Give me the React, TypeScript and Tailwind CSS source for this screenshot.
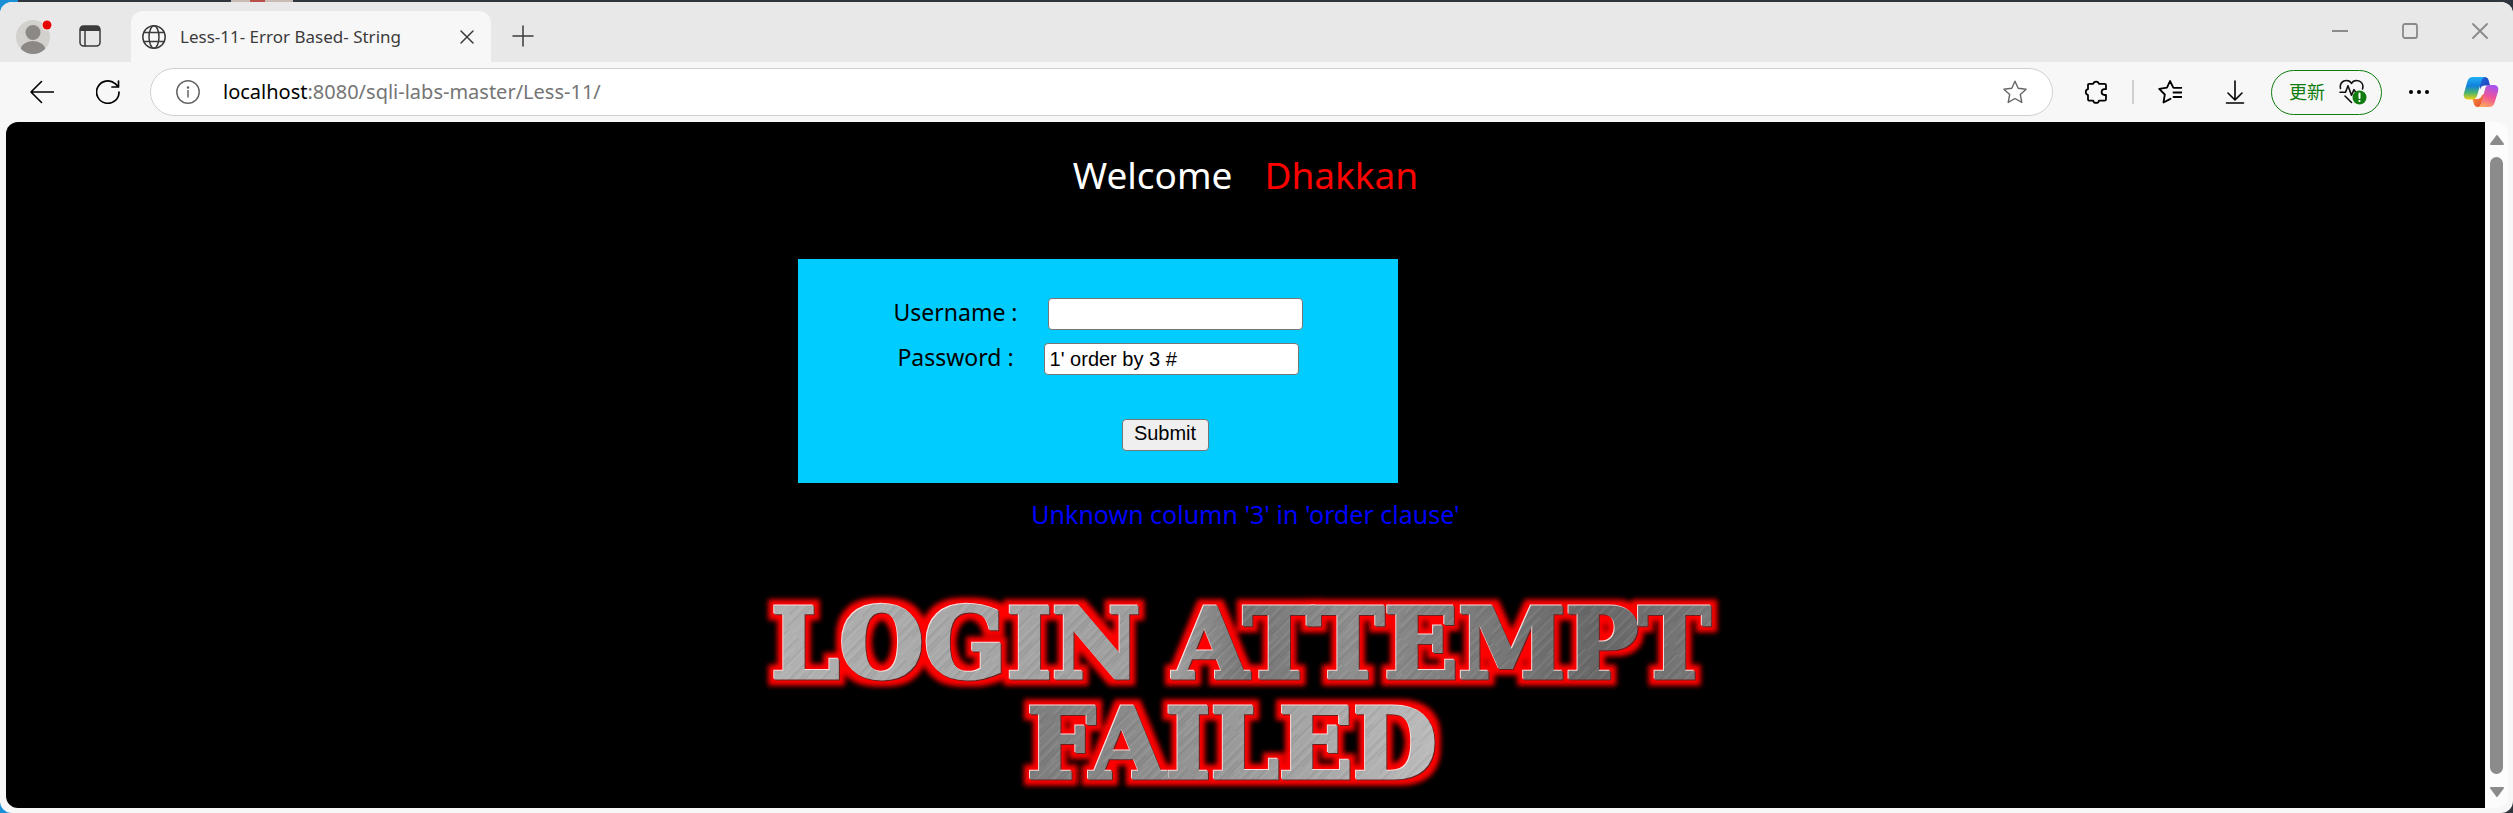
import React, { useState } from "react";

const ui = "font-['Noto_Sans','Noto_Sans_CJK_SC',sans-serif]";

type IconProps = { className?: string; children: React.ReactNode; box?: string; stroke?: number };

function Icon({ className = "size-6", children, box = "0 0 24 24", stroke = 2 }: IconProps) {
  return (
    <svg
      className={`block shrink-0 ${className}`}
      viewBox={box}
      fill="none"
      stroke="currentColor"
      strokeWidth={stroke}
      strokeLinecap="round"
      strokeLinejoin="round"
      aria-hidden="true"
    >
      {children}
    </svg>
  );
}

function Avatar() {
  return (
    <svg className="block size-10" viewBox="0 0 40 40" aria-hidden="true">
      <defs>
        <clipPath id="avatar-clip">
          <circle cx="20" cy="21" r="17" />
        </clipPath>
      </defs>
      <circle cx="20" cy="21" r="17" fill="#d3d1ce" />
      <circle cx="20" cy="16.500" r="7.500" fill="#8c8885" />
      <ellipse cx="20" cy="34" rx="12.500" ry="9" fill="#8c8885" clipPath="url(#avatar-clip)" />
      <circle cx="34" cy="9" r="5.500" fill="#f4f4f4" />
      <circle cx="34" cy="9" r="4.500" fill="#e60000" />
    </svg>
  );
}

function CopilotLogo() {
  return (
    <svg className="block h-8 w-9" viewBox="0 0 36 32" aria-hidden="true">
      <defs>
        <linearGradient id="cp-left" x1="0" y1="0" x2="0" y2="1">
          <stop offset="0" stopColor="#22b0f5" />
          <stop offset="0.4" stopColor="#1280dc" />
          <stop offset="0.7" stopColor="#4cb46c" />
          <stop offset="1" stopColor="#f4cf12" />
        </linearGradient>
        <linearGradient id="cp-right" x1="0.6" y1="0" x2="0.3" y2="1">
          <stop offset="0" stopColor="#a653ee" />
          <stop offset="0.5" stopColor="#ee5399" />
          <stop offset="1" stopColor="#ffa75c" />
        </linearGradient>
        <linearGradient id="cp-top" x1="0" y1="0" x2="1" y2="1">
          <stop offset="0" stopColor="#1f6fe0" />
          <stop offset="1" stopColor="#1b35b4" />
        </linearGradient>
        <linearGradient id="cp-bottom" x1="0" y1="0" x2="1" y2="1">
          <stop offset="0" stopColor="#ffa03c" />
          <stop offset="1" stopColor="#dc3a30" />
        </linearGradient>
      </defs>
      <path d="M16 1h5.500c2.500 0 3.600 1.500 4.200 3.500L27 9.500h-5c-3 0-4 1.500-5 4z" fill="url(#cp-top)" />
      <path d="M20 31h-5c-2.500 0-3.600-1.500-4.200-3.500L9.500 23H14c3 0 4-1.500 5-4l3-1z" fill="url(#cp-bottom)" />
      <path d="M10 1h12c-2 .5-3 2-3.700 4.300l-4.100 14C13.400 22 12 23.500 9.500 23.500H5c-3.600 0-5-3-4-6.500L4.500 5C5.400 2.300 7 1 10 1z" fill="url(#cp-left)" />
      <path d="M26.500 9H31c3.600 0 5 3 4 6.500L31.500 27c-.9 2.700-2.500 4-5.500 4H14.500c2-.5 3-2 3.700-4.300l4-14C23 10 24 9 26.500 9z" fill="url(#cp-right)" />
    </svg>
  );
}

function TitleBar() {
  return (
    <header className="flex h-[60px] bg-[#e8e8e8] text-[#3b3b3b]">
      <div className="flex w-[131px] items-center pl-[13px]">
        <button type="button" aria-label="Profile" className="mt-2">
          <Avatar />
        </button>
        <button type="button" aria-label="Tab actions" className="mt-2 ml-[25px]">
          <Icon>
            <rect x="2" y="2" width="20" height="20" rx="3.500" strokeWidth="1.500" />
            <path d="M2 7V5a3 3 0 0 1 3-3h14a3 3 0 0 1 3 3v2z" fill="currentColor" stroke="none" />
            <path d="M7 7v15" strokeWidth="1.500" />
          </Icon>
        </button>
      </div>
      <div className="flex h-[51px] w-[360px] items-center self-end rounded-t-xl bg-[#f7f7f7] pl-[11px]">
        <Icon stroke={1.5}>
          <circle cx="12" cy="12" r="11.200" />
          <ellipse cx="12" cy="12" rx="5" ry="11.200" />
          <path d="M2 7.500h20M2 16.500h20" />
        </Icon>
        <h1 className="ml-3.5 text-[17px] leading-6 whitespace-nowrap">Less-11- Error Based- String</h1>
        <button type="button" aria-label="Close tab" className="mr-4 ml-auto">
          <Icon className="size-4" box="0 0 16 16" stroke={1.5}>
            <path d="M2 2l12 12M14 2L2 14" />
          </Icon>
        </button>
      </div>
      <button type="button" aria-label="New tab" className="mt-2 ml-5">
        <Icon stroke={1.5}>
          <path d="M12 2v20M2 12h20" />
        </Icon>
      </button>
      <div className="ml-auto flex items-center gap-[54px] pr-[25px] pb-0.5 text-[#8a8a8a]">
        <button type="button" aria-label="Minimize">
          <Icon className="size-4" box="0 0 16 16">
            <path d="M0 8h16" strokeLinecap="butt" />
          </Icon>
        </button>
        <button type="button" aria-label="Maximize">
          <Icon className="size-4" box="0 0 16 16" stroke={1.8}>
            <rect x="1" y="1" width="14" height="14" rx="2" />
          </Icon>
        </button>
        <button type="button" aria-label="Close window">
          <Icon className="size-4" box="0 0 16 16" stroke={1.8}>
            <path d="M1 1l14 14M15 1L1 15" />
          </Icon>
        </button>
      </div>
    </header>
  );
}

function Toolbar() {
  return (
    <nav className="flex h-[60px] items-center bg-[#f7f7f7] pr-3.5 pl-[30px] text-black">
      <button type="button" aria-label="Back">
        <Icon stroke={1.6}>
          <path d="M23.500 12H1M11.500 1.500L1 12l10.500 10.500" />
        </Icon>
      </button>
      <button type="button" aria-label="Refresh" className="ml-[42px]">
        <Icon stroke={1.7}>
          <path d="M23 12a11.200 11.200 0 1 1-3.800-8.300L22 6.500M22.500 1v6h-6.500" />
        </Icon>
      </button>
      <div className="ml-[30px] flex h-12 flex-1 items-center rounded-full border border-[#d0d0d0] bg-white px-[25px]">
        <button type="button" aria-label="Site information" className="text-[#666]">
          <Icon stroke={1.5}>
            <circle cx="12" cy="12" r="11.200" />
            <path d="M12 10.500v6.500" />
            <circle cx="12" cy="7.500" r="0.600" fill="currentColor" />
          </Icon>
        </button>
        <div className="ml-[23px] text-[20px] leading-7 whitespace-nowrap text-[#757575]">
          <span className="text-black">localhost</span>:8080/sqli-labs-master/Less-11/
        </div>
        <button type="button" aria-label="Add to favorites" className="ml-auto text-[#666]">
          <Icon stroke={1.4}>
            <path d="M12 1.200l3.200 7.100 7.900.9-5.800 5.300 1.500 7.900-6.800-3.900-6.800 3.900 1.500-7.900L.9 9.200l7.900-.9z" />
          </Icon>
        </button>
      </div>
      <button type="button" aria-label="Extensions" className="ml-[31px]">
        <Icon stroke={1.8}>
          <path d="M5 3.800h4.200a3 3 0 0 1 5.800 0h5.500a1.500 1.500 0 0 1 1.500 1.500v3.900h-1.500a2.900 2.900 0 0 0 0 5.800H22v4.200a1.500 1.500 0 0 1-1.500 1.500H15a3 3 0 0 1-5.800 0H5.500A1.500 1.500 0 0 1 4 19.200V15a3 3 0 0 1 0-5.800V4.800a1 1 0 0 1 1-1z" />
        </Icon>
      </button>
      <div className="mx-6 h-6 w-0.5 bg-[#d0d0d0]" />
      <button type="button" aria-label="Favorites">
        <Icon stroke={1.8}>
          <path d="M16 7.800l-.7-.1L12 1 9 7.700l-7.800 1.100 5.600 5.700-1.300 8 5.500-2.900 1.500-.8M15.500 12.500h8M15.500 17h8M16.500 7.800h7" />
        </Icon>
      </button>
      <button type="button" aria-label="Downloads" className="ml-[41px]">
        <Icon stroke={1.6}>
          <path d="M12 1v18M5 13l7 7 7-7M3.500 23h17" />
        </Icon>
      </button>
      <button
        type="button"
        className="ml-6 flex h-[45px] w-[111px] items-center rounded-full border border-[#107c10] pl-[17px] text-lg leading-6 text-[#107c10]"
      >
        更新
        <svg className="ml-[14px] block h-[26px] w-7" viewBox="0 0 28 26" fill="none" strokeLinecap="round" strokeLinejoin="round" aria-hidden="true">
          <g stroke="#111" strokeWidth="1.600">
            <path d="M1.500 9.500C.5 4.500 3.500 1.500 7.500 1.500c2.500 0 4 1 5 3 1-2 2.500-3 5-3 4.500 0 7.500 3.500 6 8.500" />
            <path d="M1 13.200h5.500l2.500-6.500 3.500 9.500 2.500-5.500 1.500 2M6 17l6.500 6.500" />
          </g>
          <circle cx="20.500" cy="18.500" r="7" fill="#107c10" />
          <path d="M20.500 14.500v4.500" stroke="#fff" strokeWidth="2" />
          <circle cx="20.500" cy="22" r="1.100" fill="#fff" />
        </svg>
      </button>
      <button type="button" aria-label="Settings and more" className="ml-[25px]">
        <Icon stroke={0}>
          <g fill="currentColor">
            <circle cx="4" cy="12" r="2" />
            <circle cx="12" cy="12" r="2" />
            <circle cx="20" cy="12" r="2" />
          </g>
        </Icon>
      </button>
      <button type="button" aria-label="Copilot" className="ml-8">
        <CopilotLogo />
      </button>
    </nav>
  );
}

function FailedBanner() {
  return (
    <svg
      className="mx-auto block h-[216px] w-[1000px] font-['DejaVu_Serif',serif] text-[97px] font-bold"
      viewBox="0 0 1000 216"
      textAnchor="middle"
    >
      <defs>
        <linearGradient id="steel" gradientUnits="userSpaceOnUse" x1="0" y1="40" x2="1000" y2="0">
          <stop offset="0" stopColor="#b2b2b2" />
          <stop offset="0.43" stopColor="#9c9c9c" />
          <stop offset="0.5" stopColor="#757575" />
          <stop offset="0.6" stopColor="#8f8f8f" />
          <stop offset="0.85" stopColor="#686868" />
          <stop offset="1" stopColor="#808080" />
        </linearGradient>
        <linearGradient id="steel-low" gradientUnits="userSpaceOnUse" x1="280" y1="0" x2="720" y2="0">
          <stop offset="0" stopColor="#7c7c7c" />
          <stop offset="0.45" stopColor="#989898" />
          <stop offset="1" stopColor="#c0c0c0" />
        </linearGradient>
        <filter id="glow" filterUnits="userSpaceOnUse" x="0" y="0" width="1000" height="216" colorInterpolationFilters="sRGB">
          <feMorphology in="SourceAlpha" operator="dilate" radius="6" result="wide" />
          <feGaussianBlur in="wide" stdDeviation="2.500" result="soft" />
          <feFlood floodColor="#ff0000" />
          <feComposite in2="soft" operator="in" result="red" />
          <feOffset in="SourceAlpha" dx="-1" dy="-1" result="up" />
          <feFlood floodColor="#f6dede" />
          <feComposite in2="up" operator="in" result="edge" />
          <feOffset in="SourceAlpha" dx="1" dy="1" result="down" />
          <feFlood floodColor="#6b2020" />
          <feComposite in2="down" operator="in" result="shade" />
          <feMerge>
            <feMergeNode in="red" />
            <feMergeNode in="shade" />
            <feMergeNode in="edge" />
            <feMergeNode in="SourceGraphic" />
          </feMerge>
        </filter>
        <pattern id="scratches" width="23" height="61" patternUnits="userSpaceOnUse" patternTransform="rotate(45)">
          <path d="M2 0v40M9 10v45M17 0v30M20 25v36" stroke="#fff" strokeOpacity="0.1" strokeWidth="1.200" />
          <path d="M5 0v50M12 20v41M15 0v40" stroke="#000" strokeOpacity="0.08" strokeWidth="1.200" />
        </pattern>
        <pattern id="steel-fill" width="1000" height="216" patternUnits="userSpaceOnUse">
          <rect width="1000" height="108" fill="url(#steel)" />
          <rect y="108" width="1000" height="108" fill="url(#steel-low)" />
          <rect width="1000" height="216" fill="url(#scratches)" />
        </pattern>
      </defs>
      <g filter="url(#glow)" fill="url(#steel-fill)" stroke="url(#steel-fill)" strokeWidth="3">
        <text x="210" y="92">LOGIN</text>
        <text x="696" y="92">ATTEMPT</text>
        <text x="486" y="192">FAILED</text>
      </g>
    </svg>
  );
}

function LoginPage() {
  const [username, setUsername] = useState("");
  const [password, setPassword] = useState("1' order by 3 #");
  const field =
    "h-8 w-[255px] rounded-sm border border-[#767676] bg-white px-[5px] font-['Liberation_Sans',sans-serif] text-[20px] leading-6 text-black outline-none";
  return (
    <main className="min-w-0 flex-1 overflow-hidden bg-black">
      <h2 className="flex justify-center gap-8 pt-[26px] text-[37px] leading-[54px] text-white">
        <span>Welcome</span>
        <span className="text-[#ff0000]">Dhakkan</span>
      </h2>
      <div className="mx-auto mt-[57px] w-[895px]">
        <form
          onSubmit={(e) => e.preventDefault()}
          className="flex w-[600px] flex-col items-center bg-[#00ccff] pt-[39px] pb-8 text-[23px] leading-7 text-black"
        >
          <div className="flex items-center gap-[30px]">
            <label htmlFor="uname" className="pb-1">Username :</label>
            <input id="uname" type="text" className={field} value={username} onChange={(e) => setUsername(e.target.value)} />
          </div>
          <div className="mt-[13px] flex items-center gap-[30px]">
            <label htmlFor="passwd" className="pb-1">Password :</label>
            <input id="passwd" type="text" className={field} value={password} onChange={(e) => setPassword(e.target.value)} />
          </div>
          <button
            type="submit"
            className="mt-11 ml-[134px] h-8 w-[87px] rounded-sm border border-[#767676] bg-[#efefef] pb-1 font-['Liberation_Sans',sans-serif] text-[20px] leading-6"
          >
            Submit
          </button>
        </form>
      </div>
      <p className="mt-[15px] mb-14 text-center text-[25px] leading-8 text-[#0000ff]">Unknown column '3' in 'order clause'</p>
      <FailedBanner />
    </main>
  );
}

function ScrollBar() {
  return (
    <div className="flex w-[23px] flex-col items-center bg-[#fcfcfc] pt-3 pb-2.5 text-[#8b8b8b]">
      <svg className="block h-3 w-4" viewBox="0 0 16 12" fill="currentColor" stroke="currentColor" strokeWidth="2" strokeLinejoin="round" aria-hidden="true">
        <path d="M8 2l6 8H2z" />
      </svg>
      <div className="mt-[11px] mb-3 w-[13px] flex-1 rounded-full bg-[#8b8b8b]" />
      <svg className="block h-3 w-4" viewBox="0 0 16 12" fill="currentColor" stroke="currentColor" strokeWidth="2" strokeLinejoin="round" aria-hidden="true">
        <path d="M8 10L2 2h12z" />
      </svg>
    </div>
  );
}

export default function App() {
  return (
    <div
      className={`flex min-h-screen flex-col bg-[#2e353d] bg-[linear-gradient(90deg,#1b8fd6_0_18px,#2e353d_18px_231px,#c9bcb4_231px_250px,#b9504c_250px_265px,#c9bcb4_265px_293px,#2e353d_293px)] pt-0.5 ${ui}`}
    >
      <div className="flex flex-1 flex-col overflow-hidden rounded-xl bg-[#f7f7f7]">
        <TitleBar />
        <Toolbar />
        <div className="mr-[5px] mb-[5px] ml-1.5 flex flex-1 overflow-hidden rounded-xl">
          <LoginPage />
          <ScrollBar />
        </div>
      </div>
    </div>
  );
}
